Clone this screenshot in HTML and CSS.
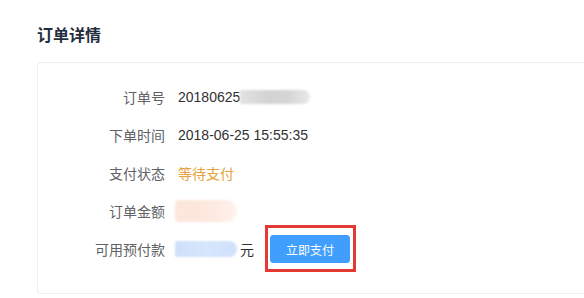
FILE: index.html
```html
<!DOCTYPE html>
<html lang="zh-CN">
<head>
  <meta charset="UTF-8">
  <title>订单详情</title>
  <link rel="stylesheet" href="styles.css">
</head>
<body>
  <div class="pagina">
    <h2 class="titulo">订单详情</h2>

    <div class="tarjeta">
      <div class="fila">
        <span class="etiqueta">订单号</span>
        <span class="valor">20180625<i class="borroso gris"></i></span>
      </div>
      <div class="fila">
        <span class="etiqueta">下单时间</span>
        <span class="valor">2018-06-25 15:55:35</span>
      </div>
      <div class="fila">
        <span class="etiqueta">支付状态</span>
        <span class="valor pendiente">等待支付</span>
      </div>
      <div class="fila">
        <span class="etiqueta">订单金额</span>
        <span class="valor"><i class="borroso melocoton"></i></span>
      </div>
      <div class="fila">
        <span class="etiqueta">可用预付款</span>
        <span class="valor"><i class="borroso azul"></i>元
          <span class="marca">
            <button class="btn-pagar">立即支付</button>
          </span>
        </span>
      </div>
    </div>
  </div>
</body>
</html>
```

FILE: styles.css
```css
html, body {
  margin: 0;
  background-color: #fff;
  overflow: hidden;
}
body {
  font-family: "Liberation Sans", "Noto Sans CJK SC", sans-serif;
}
.pagina {
  padding: 24px 0 0 37px;
}
.titulo {
  margin: 0 0 14px;
  font-size: 16px;
  line-height: 24px;
  font-weight: bold;
  color: #1f2d3d;
}
.tarjeta {
  border: 1px solid #ebeef5;
  border-right: none;
  border-radius: 4px 0 0 4px;
  padding: 15px 0 25px;
  height: 190px;
}
.fila {
  display: flex;
  align-items: center;
  height: 38px;
  font-size: 14px;
}
.etiqueta {
  width: 127px;
  text-align: right;
  color: #606266;
}
.valor {
  display: flex;
  align-items: center;
  margin-left: 13px;
  color: #303133;
}
.pendiente {
  color: #e6a23c;
}
.borroso {
  display: inline-block;
  filter: blur(1.2px);
  border-radius: 0 8px 8px 0;
}
.gris {
  width: 70px;
  height: 14px;
  background: linear-gradient(90deg, #e2e2e2, #d3d3d3 40%, #d6d6d6 70%, #e9e9ec);
}
.melocoton {
  width: 62px;
  height: 22px;
  margin-left: -3px;
  border-radius: 4px 12px 12px 4px;
  background: linear-gradient(90deg, #fde6dc, #fde8de 50%, #fff2ec);
}
.azul {
  width: 62px;
  height: 16px;
  margin-left: -3px;
  margin-right: 3px;
  border-radius: 3px 9px 9px 3px;
  background: linear-gradient(90deg, #cde0fb, #d6e6fc 50%, #cfe0fb);
}
.marca {
  position: relative;
  margin-left: 16px;
  display: inline-block;
}
.marca::after {
  content: "";
  position: absolute;
  left: -5px;
  top: -10px;
  right: -6px;
  bottom: -9px;
  border: 3px solid #e53935;
}
.btn-pagar {
  display: block;
  width: 80px;
  height: 28px;
  padding: 0;
  font-family: inherit;
  font-size: 12px;
  color: #fff;
  background-color: #409eff;
  border: 1px solid #409eff;
  border-radius: 3px;
}
```
